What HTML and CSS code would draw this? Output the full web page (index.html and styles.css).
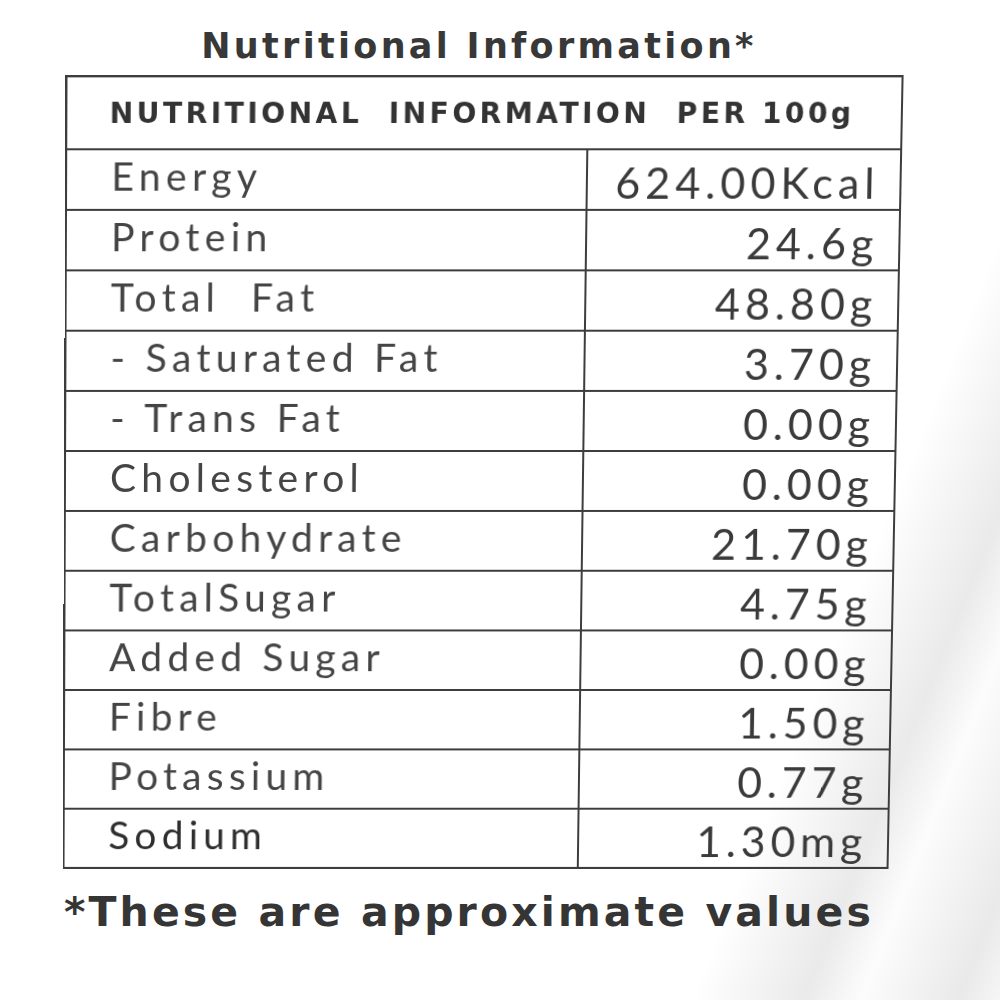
FILE: index.html
```html
<!DOCTYPE html>
<html lang="en">
<head>
<meta charset="utf-8">
<title>Nutritional Information</title>
<link rel="stylesheet" href="styles.css">
</head>
<body>
<div class="sheet">
  <h1 class="title">Nutritional Information*</h1>
  <table class="facts">
    <colgroup>
      <col class="col-name">
      <col class="col-val">
    </colgroup>
    <thead>
      <tr><th colspan="2" class="head">NUTRITIONAL&nbsp; INFORMATION&nbsp; PER 100g</th></tr>
    </thead>
    <tbody>
      <tr><td class="name">Energy</td><td class="val">624.00Kcal</td></tr>
      <tr><td class="name">Protein</td><td class="val">24.6g</td></tr>
      <tr><td class="name">Total&nbsp; Fat</td><td class="val">48.80g</td></tr>
      <tr><td class="name">- Saturated Fat</td><td class="val">3.70g</td></tr>
      <tr><td class="name">- Trans Fat</td><td class="val">0.00g</td></tr>
      <tr><td class="name">Cholesterol</td><td class="val">0.00g</td></tr>
      <tr><td class="name">Carbohydrate</td><td class="val">21.70g</td></tr>
      <tr><td class="name">TotalSugar</td><td class="val">4.75g</td></tr>
      <tr><td class="name">Added Sugar</td><td class="val">0.00g</td></tr>
      <tr><td class="name">Fibre</td><td class="val">1.50g</td></tr>
      <tr><td class="name">Potassium</td><td class="val">0.77g</td></tr>
      <tr><td class="name dark">Sodium</td><td class="val">1.30mg</td></tr>
    </tbody>
  </table>
  <p class="note">*These are approximate values</p>
</div>
</body>
</html>
```
FILE: styles.css
```css
html, body {
  margin: 0;
  padding: 0;
}
body {
  width: 1000px;
  height: 1000px;
  overflow: hidden;
  background:
    linear-gradient(112deg, rgba(255,255,255,0) 78%, rgba(225,225,225,0.7) 86%, rgba(250,250,250,0.6) 90%, rgba(228,228,228,0.8) 97%, rgba(240,240,240,0.6) 100%),
    #ffffff;
  color: #333333;
}
.sheet {
  width: 830px;
  margin-left: 64px;
  padding-top: 27px;
}
.title {
  margin: 0 0 13px 0;
  text-align: center;
  font-family: "DejaVu Sans", sans-serif;
  font-weight: bold;
  font-size: 35px;
  line-height: 38px;
  letter-spacing: 3.3px;
  color: #383838;
}
.facts {
  width: 830px;
  border-collapse: collapse;
  border: 2px solid #3d3d3d;
  table-layout: fixed;
  transform-origin: -205px 50%;
  transform: perspective(2000px) rotateX(-2.1deg);
}
.col-name {
  width: 518px;
}
.col-val {
  width: 312px;
}
.facts td, .facts th {
  border: 2px solid #3d3d3d;
  padding: 0;
}
.head {
  height: 70px;
  text-align: left;
  padding-left: 42px !important;
  font-family: "DejaVu Sans", sans-serif;
  font-weight: bold;
  font-size: 28px;
  letter-spacing: 3.4px;
  color: #333333;
}
.facts tbody tr {
  height: 60px;
}
.name {
  padding-left: 44px !important;
  padding-bottom: 9px !important;
  font-family: "Lato", sans-serif;
  font-weight: 400;
  font-size: 39px;
  letter-spacing: 5.3px;
  color: #444444;
  vertical-align: middle;
  white-space: nowrap;
}
.name.dark {
  color: #2e2e2e;
}
.val {
  text-align: right;
  padding-right: 20px !important;
  padding-top: 4px !important;
  font-family: "Lato", sans-serif;
  font-weight: 400;
  font-size: 43px;
  letter-spacing: 4.9px;
  color: #3a3a3a;
  vertical-align: middle;
  white-space: nowrap;
}
.note {
  margin: 16px 0 0 0;
  font-family: "DejaVu Sans", sans-serif;
  font-weight: bold;
  font-size: 41px;
  line-height: 48px;
  color: #353535;
  letter-spacing: 3.1px;
}
```
